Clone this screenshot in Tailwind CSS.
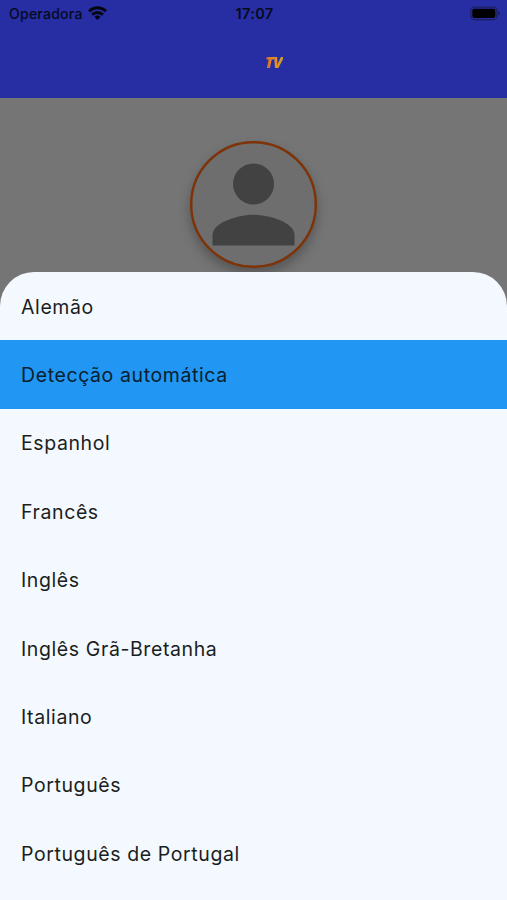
<!DOCTYPE html>
<html lang="pt">
<head>
<meta charset="utf-8">
<title>Idioma</title>
<script src="https://cdn.jsdelivr.net/npm/@tailwindcss/browser@4"></script>
</head>
<body class="h-[900px] w-[507px] overflow-hidden bg-[#757575] font-['Inter',sans-serif]">
<div class="relative flex h-[900px] flex-col overflow-hidden">
  <header class="h-[98px] shrink-0 bg-[#272da2] text-[#050a20]">
    <div class="grid h-7 grid-cols-3 items-center pr-[7px] pl-[9px]">
      <div class="flex items-center gap-[5px]">
        <span class="-translate-y-px text-[14px] font-[450] tracking-[0.25px]">Operadora</span>
        <svg class="h-[14px] w-[19px] -translate-y-px" viewBox="0 0 19 14" fill="none" stroke="#03060f" stroke-width="2.9">
          <path d="M1 5.2a12.2 12.2 0 0 1 17 0M4.1 8.7a7.8 7.8 0 0 1 10.8 0"/>
          <path d="M9.5 14 6.5 11a4.3 4.3 0 0 1 6 0Z" fill="#03060f" stroke="none"/>
        </svg>
      </div>
      <div class="text-center text-[14.5px] font-semibold tracking-[0.3px]">17:07</div>
      <svg class="h-[15px] w-[30px] -translate-y-px justify-self-end" viewBox="0 0 30 15">
        <rect x=".8" y="1.2" width="26" height="12.4" rx="3.5" fill="none" stroke="#1b2160" stroke-width="1.2"/>
        <rect x="2.3" y="2.7" width="23" height="9.4" rx="2" fill="#000"/>
        <path d="M28 5.2q1.8.6 1.8 2.2T28 9.6Z" fill="#1b2160"/>
      </svg>
    </div>
    <div class="flex h-[68px] items-center justify-center pl-[40px]">
      <span class="bg-linear-to-r from-[#d06434] via-[#e58a25] to-[#c9a02b] bg-clip-text px-px font-['Open_Sans',sans-serif] text-[16px] leading-5 font-extrabold tracking-[-0.8px] text-transparent italic">TV</span>
    </div>
  </header>
  <main class="flex justify-center pt-[43px]">
    <div class="size-[127px] rounded-full bg-[#6e6e6e] shadow-[0_6px_12px_rgba(0,0,0,0.28)]">
      <svg class="size-full" viewBox="0 0 127 127" fill="#424242">
        <circle cx="63.5" cy="63.5" r="62.3" fill="none" stroke="#7d3207" stroke-width="2.4"/>
        <g transform="translate(2 2) scale(5.125)">
          <circle cx="12" cy="8" r="4"/>
          <path d="M12 14c-2.67 0-8 1.34-8 4v2h16v-2c0-2.66-5.33-4-8-4z"/>
        </g>
      </svg>
    </div>
  </main>
  <ul class="absolute inset-x-0 top-[272px] bottom-0 overflow-hidden rounded-t-[34px] bg-[#f3f9ff] text-[19.5px] tracking-[0.6px] text-[#1b1e21] *:flex *:h-[68.4px] *:items-center *:pt-[2px] *:pl-[21px]">
    <li>Alemão</li>
    <li class="bg-[#2196f3] text-[#08202f]">Detecção automática</li>
    <li>Espanhol</li>
    <li>Francês</li>
    <li>Inglês</li>
    <li>Inglês Grã-Bretanha</li>
    <li>Italiano</li>
    <li>Português</li>
    <li>Português de Portugal</li>
  </ul>
</div>
</body>
</html>
